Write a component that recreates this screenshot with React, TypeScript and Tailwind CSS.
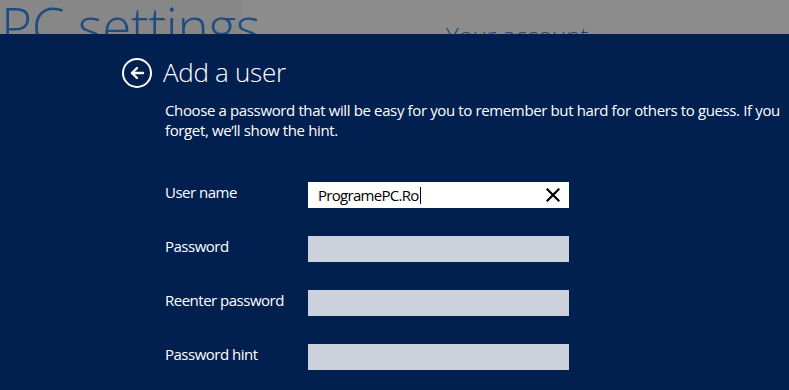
import React from 'react';

const FormRow: React.FC<{ label: string; children: React.ReactNode }> = ({ label, children }) => (
    <div className="flex items-center h-[26px]">
        <div className="w-[143px] text-[15px] text-white leading-none -mt-[5px] tracking-[-0.5px]">{label}</div>
        {children}
    </div>
);

const EmptyInput: React.FC = () => <div className="w-[261px] h-[26px] bg-[#cbd2dc]"></div>;

const App: React.FC = () => {
    return (
        <div className="w-[789px] h-[390px] overflow-hidden flex flex-col bg-[#011f4f]" style={{ fontFamily: '"Open Sans", "Liberation Sans", sans-serif' }}>
            <header className="h-[34px] flex flex-shrink-0 overflow-hidden">
                <div className="w-[242px] bg-[#878787] pl-[1px]">
                    <div className="relative z-10 text-[53px] font-light leading-none text-[#1d4b82] whitespace-nowrap -mt-[1px] tracking-[-0.3px]">PC settings</div>
                </div>
                <div className="flex-1 bg-[#8c8c8c] pl-[204px] pt-[24px]">
                    <div className="text-[24px] font-light leading-none text-[#23456f] whitespace-nowrap">Your account</div>
                </div>
            </header>

            <main className="flex-1 pl-[122px] pt-[24px]">
                <div className="flex items-center gap-[11px] h-[30px]">
                    <button className="w-[30px] h-[30px] rounded-full border-2 border-white flex items-center justify-center text-white" aria-label="Back">
                        <svg width="16" height="16" viewBox="0 0 16 16" fill="none" stroke="currentColor" strokeWidth="2.4" strokeLinecap="round" strokeLinejoin="round">
                            <path d="M14 8H3" />
                            <path d="M8 3L3 8l5 5" />
                        </svg>
                    </button>
                    <h1 className="text-[26px] font-light text-white leading-none -mt-[2px] tracking-[-0.3px]">Add a user</h1>
                </div>

                <p className="mt-[12px] ml-[43px] text-[15px] leading-[20px] text-white whitespace-nowrap tracking-[-0.37px]">
                    Choose a password that will be easy for you to remember but hard for others to guess. If you
                    <br />
                    forget, we’ll show the hint.
                </p>

                <div className="mt-[42px] ml-[43px] flex flex-col gap-[28px]">
                    <FormRow label="User name">
                        <div className="w-[261px] h-[26px] bg-white flex items-center pl-[10px] pr-[9px]">
                            <span className="text-[15px] text-black leading-none tracking-[-0.7px]">ProgramePC.Ro</span>
                            <span className="w-[1px] h-[17px] bg-black ml-[1px]"></span>
                            <svg className="ml-auto" width="14" height="14" viewBox="0 0 14 14" stroke="black" strokeWidth="2.2" strokeLinecap="square">
                                <path d="M1.5 1.5l11 11M12.5 1.5l-11 11" />
                            </svg>
                        </div>
                    </FormRow>
                    <FormRow label="Password">
                        <EmptyInput />
                    </FormRow>
                    <FormRow label="Reenter password">
                        <EmptyInput />
                    </FormRow>
                    <FormRow label="Password hint">
                        <EmptyInput />
                    </FormRow>
                </div>
            </main>
        </div>
    );
};

export default App;
